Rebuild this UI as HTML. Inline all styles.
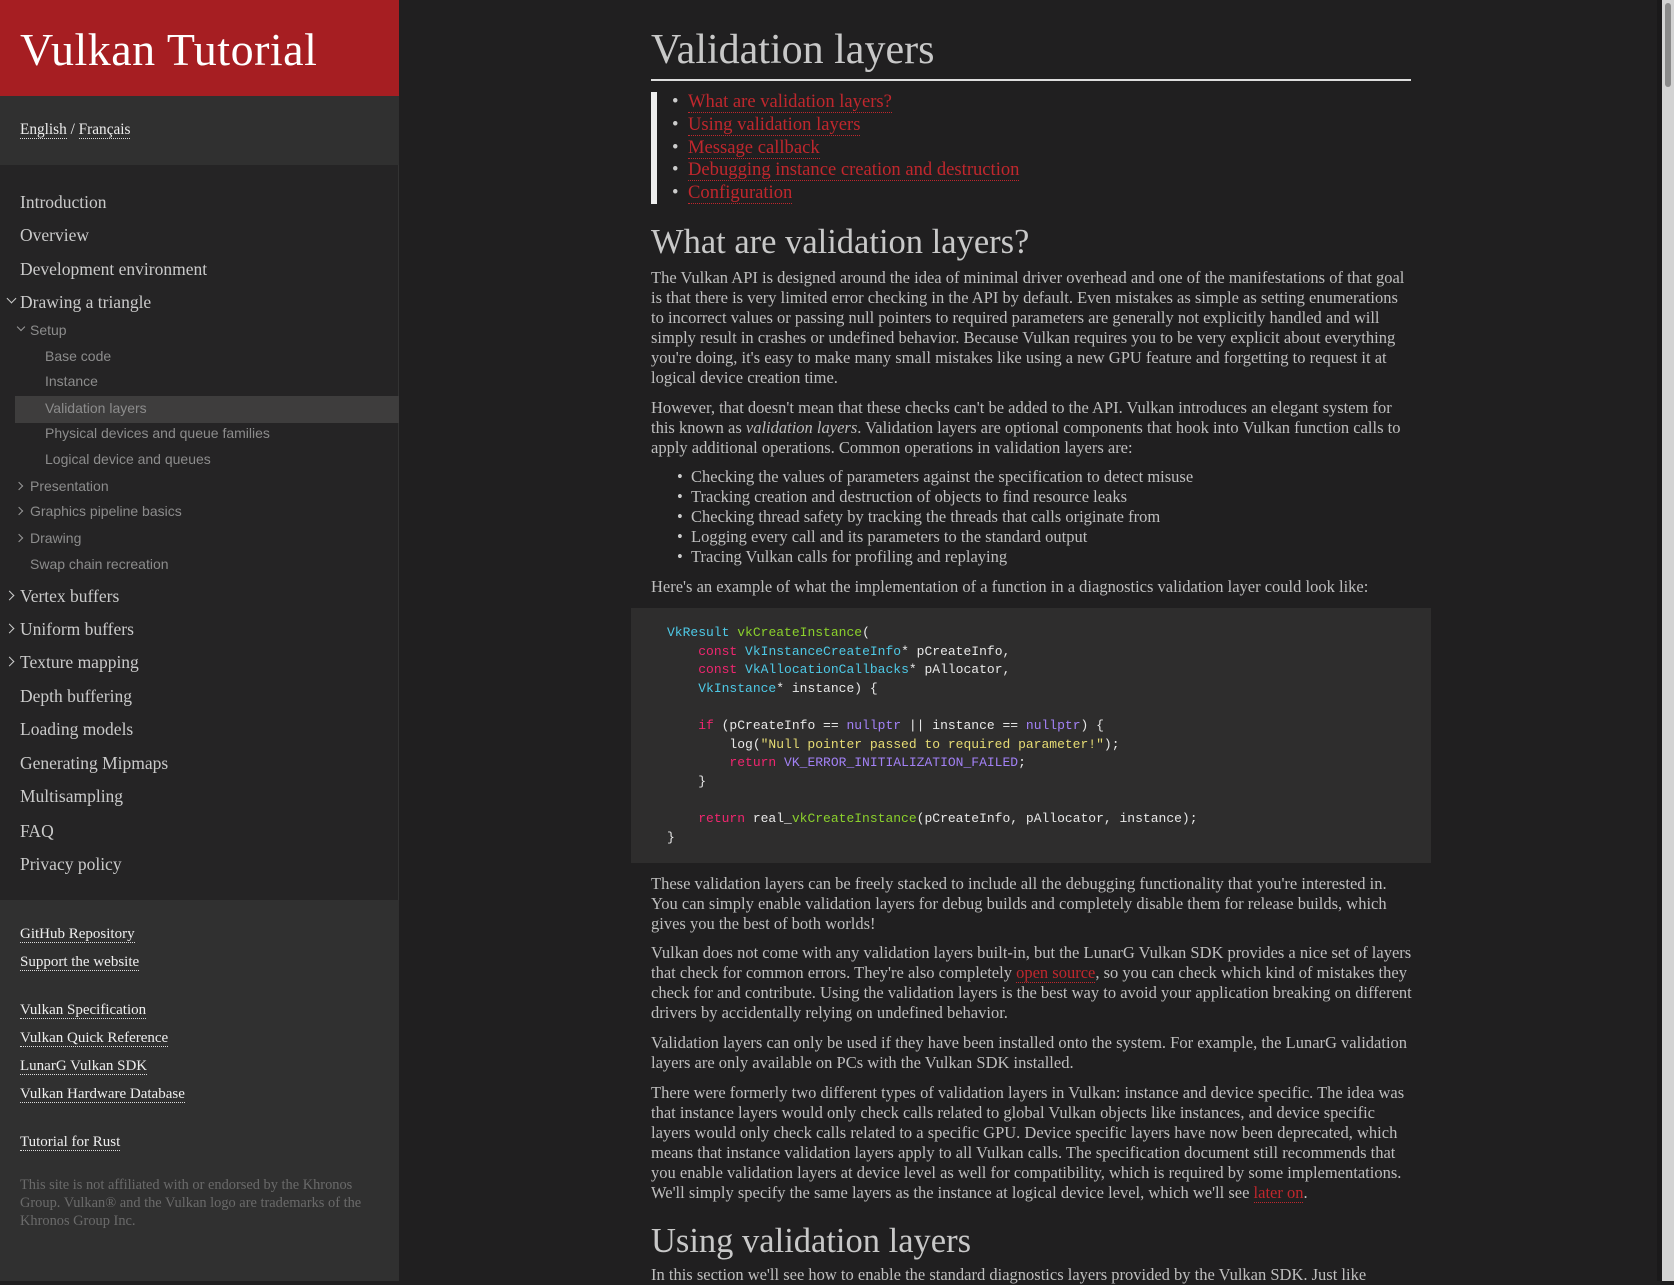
<!DOCTYPE html>
<html><head><meta charset="utf-8"><style>
*{margin:0;padding:0;box-sizing:border-box}
body{width:1674px;height:1281px;overflow:hidden;background:#201f20;font-family:"Liberation Serif","DejaVu Serif",serif;color:#c9c9c9;position:relative}
.a{position:absolute;white-space:nowrap}
#side{position:absolute;left:0;top:0;width:399px;height:1281px;background:#252425;border-right:1px solid #333}
#hdr{position:absolute;left:0;top:0;width:399px;height:96px;background:#a61e22}
#hdr div{position:absolute;left:20px;top:23px;font-size:46px;color:#fff;letter-spacing:.5px}
#lang{position:absolute;left:0;top:96px;width:399px;height:69px;background:#303030}
.ul{color:#eee;text-decoration:none;border-bottom:1px dotted #ddd}
#foot{position:absolute;left:0;top:900px;width:399px;height:381px;background:#303030}
.n{position:absolute;white-space:nowrap;font-size:17.5px;color:#cacaca;line-height:20px}
.s{position:absolute;white-space:nowrap;font-family:"Liberation Sans",sans-serif;font-size:14px;color:#8c8c8c;line-height:20px}
.ch{position:absolute;width:7px;height:7px;border-right:1.6px solid #ccc;border-bottom:1.6px solid #ccc}
.f{position:absolute;white-space:nowrap;font-size:15px;line-height:18px}
.p{position:absolute;left:651px;font-size:16.5px;line-height:20px;white-space:nowrap;color:#bebebe}
.r{color:#c0272d;border-bottom:1px dotted #c0272d}
.b{display:inline-block;width:16px;color:#ccc}
.code{position:absolute;left:667px;top:624px;font-family:"Liberation Mono",monospace;font-size:13px;line-height:18.6px;white-space:pre;color:#e8e8e8}
.t{color:#4ec9e6}.g{color:#8bd12c}.k{color:#f0266f}.v{color:#a281f5}.y{color:#e6db74}
</style></head><body>
<div id="side">
<div id="hdr"><div>Vulkan Tutorial</div></div>
<div id="lang"><div class="a" style="left:20px;top:25px;font-size:15.3px;color:#eee"><span class="ul">English</span> / <span class="ul">Français</span></div></div>
<div style="position:absolute;left:15px;top:396px;width:384px;height:27px;background:#3e3d3d"></div>
<div class="n" style="left:20px;top:192px">Introduction</div>
<div class="n" style="left:20px;top:225px">Overview</div>
<div class="n" style="left:20px;top:259px">Development environment</div>
<div class="ch" style="left:8px;top:295px;transform:rotate(45deg)"></div>
<div class="n" style="left:20px;top:292px">Drawing a triangle</div>
<div class="ch" style="left:18px;top:324px;width:6px;height:6px;border-color:#999;transform:rotate(45deg)"></div>
<div class="s" style="left:30px;top:320px">Setup</div>
<div class="s" style="left:45px;top:346px">Base code</div>
<div class="s" style="left:45px;top:371px">Instance</div>
<div class="s" style="left:45px;top:398px">Validation layers</div>
<div class="s" style="left:45px;top:423px">Physical devices and queue families</div>
<div class="s" style="left:45px;top:449px">Logical device and queues</div>
<div class="ch" style="left:16px;top:483px;width:6px;height:6px;border-color:#999;transform:rotate(-45deg)"></div>
<div class="s" style="left:30px;top:476px">Presentation</div>
<div class="ch" style="left:16px;top:508px;width:6px;height:6px;border-color:#999;transform:rotate(-45deg)"></div>
<div class="s" style="left:30px;top:501px">Graphics pipeline basics</div>
<div class="ch" style="left:16px;top:535px;width:6px;height:6px;border-color:#999;transform:rotate(-45deg)"></div>
<div class="s" style="left:30px;top:528px">Drawing</div>
<div class="s" style="left:30px;top:554px">Swap chain recreation</div>
<div class="ch" style="left:6px;top:592px;transform:rotate(-45deg)"></div>
<div class="n" style="left:20px;top:586px">Vertex buffers</div>
<div class="ch" style="left:6px;top:625px;transform:rotate(-45deg)"></div>
<div class="n" style="left:20px;top:619px">Uniform buffers</div>
<div class="ch" style="left:6px;top:658px;transform:rotate(-45deg)"></div>
<div class="n" style="left:20px;top:652px">Texture mapping</div>
<div class="n" style="left:20px;top:686px">Depth buffering</div>
<div class="n" style="left:20px;top:719px">Loading models</div>
<div class="n" style="left:20px;top:753px">Generating Mipmaps</div>
<div class="n" style="left:20px;top:786px">Multisampling</div>
<div class="n" style="left:20px;top:821px">FAQ</div>
<div class="n" style="left:20px;top:854px">Privacy policy</div>
<div id="foot">
<div class="f" style="left:20px;top:25px"><span class="ul">GitHub Repository</span></div>
<div class="f" style="left:20px;top:53px"><span class="ul">Support the website</span></div>
<div class="f" style="left:20px;top:101px"><span class="ul">Vulkan Specification</span></div>
<div class="f" style="left:20px;top:129px"><span class="ul">Vulkan Quick Reference</span></div>
<div class="f" style="left:20px;top:157px"><span class="ul">LunarG Vulkan SDK</span></div>
<div class="f" style="left:20px;top:185px"><span class="ul">Vulkan Hardware Database</span></div>
<div class="f" style="left:20px;top:233px"><span class="ul">Tutorial for Rust</span></div>
<div class="f" style="left:20px;top:276px;font-size:14.4px;color:#6a6a6a;line-height:18px">This site is not affiliated with or endorsed by the Khronos<br>Group. Vulkan® and the Vulkan logo are trademarks of the<br>Khronos Group Inc.</div>
</div>
</div>

<div class="a" style="left:651px;top:26px;font-size:42px;color:#c8c8c8">Validation layers</div>
<div style="position:absolute;left:651px;top:79px;width:760px;height:2px;background:#ddd"></div>
<div style="position:absolute;left:651px;top:92px;width:6px;height:112px;background:#eee"></div>
<div class="a" style="left:672px;top:91px;font-size:18.6px;line-height:22.75px;color:#c0272d">
<div><span class="b">•</span><span class="r">What are validation layers?</span></div>
<div><span class="b">•</span><span class="r">Using validation layers</span></div>
<div><span class="b">•</span><span class="r">Message callback</span></div>
<div><span class="b">•</span><span class="r">Debugging instance creation and destruction</span></div>
<div><span class="b">•</span><span class="r">Configuration</span></div>
</div>
<div class="a" style="left:651px;top:223px;font-size:34.5px;color:#c8c8c8">What are validation layers?</div>
<div class="p" style="top:268px">The Vulkan API is designed around the idea of minimal driver overhead and one of the manifestations of that goal<br>is that there is very limited error checking in the API by default. Even mistakes as simple as setting enumerations<br>to incorrect values or passing null pointers to required parameters are generally not explicitly handled and will<br>simply result in crashes or undefined behavior. Because Vulkan requires you to be very explicit about everything<br>you're doing, it's easy to make many small mistakes like using a new GPU feature and forgetting to request it at<br>logical device creation time.</div>
<div class="p" style="top:398px">However, that doesn't mean that these checks can't be added to the API. Vulkan introduces an elegant system for<br>this known as <i>validation layers</i>. Validation layers are optional components that hook into Vulkan function calls to<br>apply additional operations. Common operations in validation layers are:</div>
<div class="p" style="top:467px;left:677px"><span class="b" style="width:14px">•</span>Checking the values of parameters against the specification to detect misuse<br><span class="b" style="width:14px">•</span>Tracking creation and destruction of objects to find resource leaks<br><span class="b" style="width:14px">•</span>Checking thread safety by tracking the threads that calls originate from<br><span class="b" style="width:14px">•</span>Logging every call and its parameters to the standard output<br><span class="b" style="width:14px">•</span>Tracing Vulkan calls for profiling and replaying</div>
<div class="p" style="top:577px">Here's an example of what the implementation of a function in a diagnostics validation layer could look like:</div>
<div style="position:absolute;left:631px;top:608px;width:800px;height:255px;background:#2e2d2d"></div>
<div class="code"><span class="t">VkResult</span> <span class="g">vkCreateInstance</span>(
    <span class="k">const</span> <span class="t">VkInstanceCreateInfo</span>* pCreateInfo,
    <span class="k">const</span> <span class="t">VkAllocationCallbacks</span>* pAllocator,
    <span class="t">VkInstance</span>* instance) {

    <span class="k">if</span> (pCreateInfo == <span class="v">nullptr</span> || instance == <span class="v">nullptr</span>) {
        log(<span class="y">"Null pointer passed to required parameter!"</span>);
        <span class="k">return</span> <span class="v">VK_ERROR_INITIALIZATION_FAILED</span>;
    }

    <span class="k">return</span> real_<span class="g">vkCreateInstance</span>(pCreateInfo, pAllocator, instance);
}</div>
<div class="p" style="top:874px">These validation layers can be freely stacked to include all the debugging functionality that you're interested in.<br>You can simply enable validation layers for debug builds and completely disable them for release builds, which<br>gives you the best of both worlds!</div>
<div class="p" style="top:943px">Vulkan does not come with any validation layers built-in, but the LunarG Vulkan SDK provides a nice set of layers<br>that check for common errors. They're also completely <span class="r">open source</span>, so you can check which kind of mistakes they<br>check for and contribute. Using the validation layers is the best way to avoid your application breaking on different<br>drivers by accidentally relying on undefined behavior.</div>
<div class="p" style="top:1033px">Validation layers can only be used if they have been installed onto the system. For example, the LunarG validation<br>layers are only available on PCs with the Vulkan SDK installed.</div>
<div class="p" style="top:1083px">There were formerly two different types of validation layers in Vulkan: instance and device specific. The idea was<br>that instance layers would only check calls related to global Vulkan objects like instances, and device specific<br>layers would only check calls related to a specific GPU. Device specific layers have now been deprecated, which<br>means that instance validation layers apply to all Vulkan calls. The specification document still recommends that<br>you enable validation layers at device level as well for compatibility, which is required by some implementations.<br>We'll simply specify the same layers as the instance at logical device level, which we'll see <span class="r">later on</span>.</div>
<div class="a" style="left:651px;top:1222px;font-size:34.5px;color:#c8c8c8">Using validation layers</div>
<div class="p" style="top:1265px">In this section we'll see how to enable the standard diagnostics layers provided by the Vulkan SDK. Just like</div>

<div style="position:absolute;left:1657px;top:0;width:5px;height:1281px;background:#1a191a"></div>
<div style="position:absolute;left:1662px;top:0;width:12px;height:1281px;background:#d3d3d3"></div>
<div style="position:absolute;left:1665px;top:3px;width:6px;height:84px;background:#8a8a8a;border-radius:3px"></div>
</body></html>
